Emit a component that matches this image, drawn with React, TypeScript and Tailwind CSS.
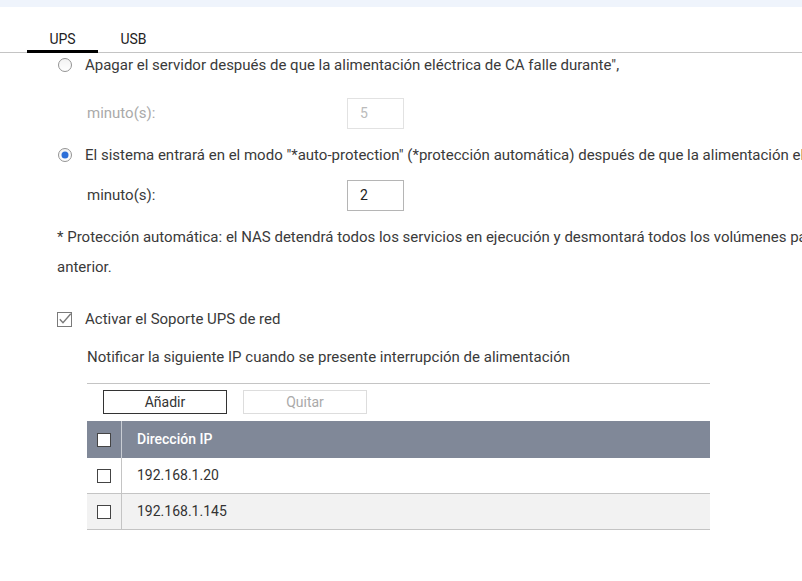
import React, { useState } from 'react';

const RadioIcon = ({ checked }: { checked: boolean }) => (
  <svg width="16" height="16" viewBox="0 0 16 16" className="shrink-0">
    <defs>
      <linearGradient id={checked ? 'rg-on' : 'rg-off'} x1="0" y1="0" x2="0" y2="1">
        <stop offset="0" stopColor="#f2f2f2" />
        <stop offset="1" stopColor="#ffffff" />
      </linearGradient>
    </defs>
    <circle cx="8" cy="8" r="6.5" fill={`url(#${checked ? 'rg-on' : 'rg-off'})`} stroke="#949494" strokeWidth="1" />
    {checked && <circle cx="8" cy="8" r="3.5" fill="#2d6fd8" />}
  </svg>
);

const CheckIcon = ({ checked }: { checked: boolean }) => (
  <svg width="15" height="15" viewBox="0 0 15 15" className="shrink-0">
    <rect x="0.5" y="0.5" width="14" height="14" fill="#fff" stroke="#7a7a7a" />
    {checked && (
      <path d="M2.8 7.2 L6 10.8 L13.8 1.8" fill="none" stroke="#7a7a7a" strokeWidth="1.4" />
    )}
  </svg>
);

const BoxIcon = () => (
  <span className="block w-[14px] h-[14px] border border-[#444] bg-white" />
);

export default function App() {
  const [tab, setTab] = useState('UPS');
  const [mode, setMode] = useState<'off' | 'auto'>('auto');
  const rows = ['192.168.1.20', '192.168.1.145'];

  return (
    <div
      className="w-[802px] h-[581px] overflow-hidden bg-white text-[15px] text-[#3a3a3a] whitespace-nowrap"
      style={{ fontFamily: 'Roboto, "Liberation Sans", sans-serif' }}
    >
      <div className="h-[7px] bg-[#eff4fc]" />

      <div className="h-[46px] flex pl-[27px] border-b border-[#c4c4c4]">
        {['UPS', 'USB'].map((t) => (
          <button
            key={t}
            onClick={() => setTab(t)}
            className={`w-[71px] h-[46px] flex items-end justify-center pb-[3px] leading-[16px] text-[14px] text-[#222] border-b-[3px] ${
              tab === t ? 'border-black' : 'border-transparent'
            }`}
          >
            {t}
          </button>
        ))}
      </div>

      <div className="pl-[57px]">
        <label className="h-6 flex items-center gap-[12px]" onClick={() => setMode('off')}>
          <RadioIcon checked={mode === 'off'} />
          <span>Apagar el servidor después de que la alimentación eléctrica de CA falle durante",</span>
        </label>

        <div className="mt-[21px] h-[31px] flex items-center pl-[30px]">
          <span className="w-[260px] text-[#aaa]">minuto(s):</span>
          <div className="w-[57px] h-[31px] border border-[#e2e2e2] flex items-center px-[12px] text-[14px] text-[#bbb]">5</div>
        </div>

        <label className="mt-[14px] h-6 flex items-center gap-[12px]" onClick={() => setMode('auto')}>
          <RadioIcon checked={mode === 'auto'} />
          <span>
            El sistema entrará en el modo "*auto-protection" (*protección automática) después de que la alimentación eléctrica de CA falle durante
          </span>
        </label>

        <div className="mt-[13px] h-[31px] flex items-center pl-[30px]">
          <span className="w-[260px]">minuto(s):</span>
          <div className="w-[57px] h-[31px] border border-[#b5b5b5] flex items-center px-[12px] text-[14px] text-[#222]">2</div>
        </div>

        <p className="mt-[11px] leading-[30px]">
          * Protección automática: el NAS detendrá todos los servicios en ejecución y desmontará todos los volúmenes para protegerlos hasta el estado
          <br />
          anterior.
        </p>

        <label className="mt-[25px] h-6 flex items-center gap-[13px]">
          <CheckIcon checked />
          <span>Activar el Soporte UPS de red</span>
        </label>

        <div className="mt-[14px] h-6 flex items-center pl-[30px]">
          Notificar la siguiente IP cuando se presente interrupción de alimentación
        </div>

        <div className="mt-[14px] ml-[30px] w-[623px] border-t border-[#c4c4c4]">
          <div className="pt-[6px] pl-[16px] flex gap-[16px]">
            <button className="w-[124px] h-[24px] border border-[#333] text-[14px] text-[#333] flex items-center justify-center">
              Añadir
            </button>
            <button className="w-[124px] h-[24px] border border-[#ddd] text-[14px] text-[#aaa] flex items-center justify-center">
              Quitar
            </button>
          </div>

          <div className="mt-[7px] h-[37px] bg-[#808898] flex items-stretch">
            <div className="w-[35px] flex items-center justify-center border-r border-[#c9cdd4]">
              <BoxIcon />
            </div>
            <div className="pl-[15px] flex items-center text-white font-medium text-[14px]">Dirección IP</div>
          </div>

          {rows.map((ip, i) => (
            <div
              key={ip}
              className={`h-[36px] flex items-stretch border-b border-[#c4c4c4] ${i % 2 === 1 ? 'bg-[#f2f2f2]' : 'bg-white'}`}
            >
              <div className="w-[35px] flex items-center justify-center border-r border-[#c4c4c4]">
                <BoxIcon />
              </div>
              <div className="pl-[15px] flex items-center text-[14px] text-[#333]">{ip}</div>
            </div>
          ))}
        </div>
      </div>
    </div>
  );
}
